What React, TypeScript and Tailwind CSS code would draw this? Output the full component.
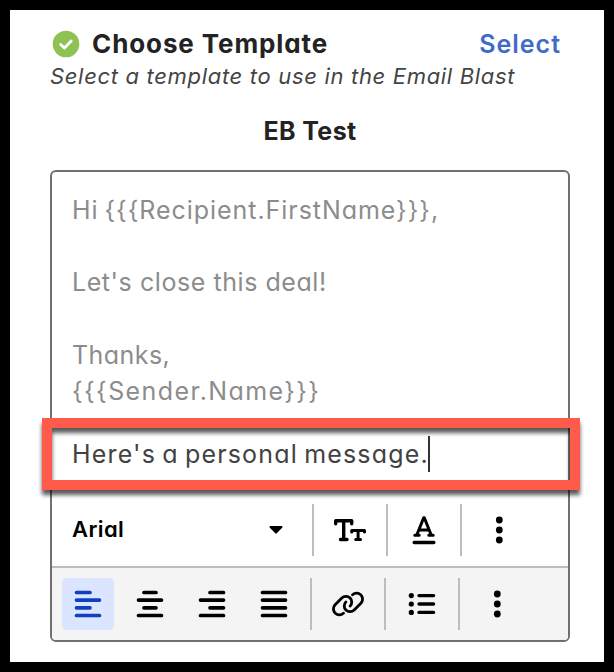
import React from 'react';

const TEXT = 'whitespace-nowrap';

const alignments = [
  { id: 'left', lines: ['M2 2h13.5', 'M2 9.6h23', 'M2 17.3h13.5', 'M2 25h23'] },
  { id: 'center', lines: ['M7.5 2h12', 'M2 9.6h23', 'M7.5 17.3h12', 'M2 25h23'] },
  { id: 'right', lines: ['M11.5 2h13.5', 'M2 9.6h23', 'M11.5 17.3h13.5', 'M2 25h23'] },
  { id: 'justify', lines: ['M2 2h23', 'M2 9.6h23', 'M2 17.3h23', 'M2 25h23'] },
];

const ToolButton: React.FC<{ active?: boolean; label: string; children: React.ReactNode }> = ({ active, label, children }) => (
  <button
    aria-label={label}
    className={`w-[52px] h-[52px] shrink-0 flex items-center justify-center rounded-[5px] ${
      active ? 'bg-[#dbe5ff] text-[#0f41bc]' : 'text-black'
    }`}
  >
    {children}
  </button>
);

const Divider = () => <div className="w-0.5 h-[52px] shrink-0 bg-[#bdbdbd]" />;

const MoreIcon = () => (
  <svg width="8" height="28" viewBox="0 0 8 28" fill="currentColor" className="ml-0.5">
    <circle cx="4.3" cy="4" r="3.4" />
    <circle cx="4.3" cy="14" r="3.4" />
    <circle cx="4.3" cy="24" r="3.4" />
  </svg>
);

const TextSizeIcon = () => (
  <svg width="34" height="24" viewBox="0 0 34 24" fill="none" stroke="currentColor" strokeWidth="3" strokeLinecap="round" strokeLinejoin="round">
    <path d="M2.7 5.8V2.7h16v3.1M10.7 2.7v18.8M7.5 21.5h6.5" strokeWidth="3.4" />
    <path d="M18.7 14v-1.5h12.8V14M25.1 12.5v9M22.7 21.5h4.8" />
  </svg>
);

const TextColorIcon = () => (
  <svg width="24" height="30" viewBox="0 0 24 30" fill="none" stroke="currentColor" strokeWidth="3" strokeLinecap="round" strokeLinejoin="round">
    <path d="M4.8 20L11.7 2.7h.6L19.2 20M7.5 15h9M2.8 20.2h4.4M16.8 20.2h4.4" />
    <path d="M2.2 27.5h19.6" strokeWidth="3.4" />
  </svg>
);

const LinkIcon = () => (
  <svg width="34" height="28" viewBox="0 0 34 28" fill="none" stroke="currentColor" strokeWidth="2.8" strokeLinecap="round">
    <path d="M21.5 4.8c2.3-2 5.800-2.200 8.200-.1s2.500 6.200.2 8.500l-6.700 6.700c-2.300 2.300-6 2.400-8.300.1-2.200-2.200-2.200-5.800 0-8.100" />
    <path d="M12.5 23.200c-2.300 2-5.800 2.200-8.200.1s-2.500-6.200-.2-8.500l6.700-6.700c2.300-2.300 6-2.400 8.300-.1 2.200 2.200 2.200 5.800 0 8.100" />
  </svg>
);

const ListIcon = () => (
  <svg width="28" height="24" viewBox="0 0 28 24" fill="currentColor" stroke="currentColor">
    {[3.6, 12, 20.4].map((y) => (
      <g key={y}>
        <circle cx="3.3" cy={y} r="2.6" stroke="none" />
        <path d={`M11 ${y}h14.6`} strokeWidth="3.3" strokeLinecap="round" />
      </g>
    ))}
  </svg>
);

const App: React.FC = () => {
  return (
    <div className="w-[614px] h-[672px] border-10 border-black bg-white px-10 pt-4 overflow-hidden font-[Inter,sans-serif] [font-feature-settings:'cv11']">
      <div className="flex items-center h-9">
        <svg width="28" height="28" viewBox="0 0 28 28" className="ml-0.5 shrink-0">
          <circle cx="14" cy="14" r="13.3" fill="#8fc255" />
          <path d="M8.7 14.5l3.7 3.5 6.8-7" fill="none" stroke="white" strokeWidth="2.8" strokeLinecap="round" strokeLinejoin="round" />
        </svg>
        <h1 className={`${TEXT} ml-3 text-[26px] leading-9 font-bold text-[#232323] tracking-[0.9px]`}>Choose Template</h1>
        <button className={`${TEXT} ml-auto mr-[3px] leading-9 text-[25px] font-semibold text-[#426bc9] tracking-[1px]`}>Select</button>
      </div>
      <p className={`${TEXT} h-7 leading-7 text-[22px] italic text-[#444] tracking-[0.68px]`}>
        Select a template to use in the Email Blast
      </p>
      <h2 className={`${TEXT} mt-[23px] mb-[21px] h-9 pl-1.5 leading-9 text-center text-[25px] font-bold text-[#232323] tracking-[0.4px]`}>EB Test</h2>

      <div className="relative w-[520px] h-[472px] flex flex-col border-2 border-[#707070] rounded-md">
        <div className="h-[322px] px-5 pt-5 text-[25px] leading-[36.2px] text-[#8c8c8c]">
          <p className={`${TEXT} tracking-[0.95px] [word-spacing:-2px]`}>Hi {'{{{Recipient.FirstName}}}'},</p>
          <br />
          <p className={`${TEXT} tracking-[0.56px]`}>Let's close this deal!</p>
          <br />
          <p className={`${TEXT} tracking-[0.45px]`}>Thanks,</p>
          <p className={`${TEXT} tracking-[1.4px]`}>{'{{{Sender.Name}}}'}</p>
          <div className="mt-[27px] flex items-center h-9 text-[#424242]">
            <span className={`${TEXT} tracking-[1.17px] [word-spacing:-2px]`}>Here's a personal message.</span>
            <span className="-ml-px w-0.5 h-9 bg-[#333]" />
          </div>
        </div>

        <div className="h-[72px] shrink-0 px-2.5 flex items-center gap-2.5">
          <div className="w-[240px] pl-2.5 pr-[18px] flex items-center justify-between text-black">
            <span className={`${TEXT} pb-0.5 text-[22px] font-semibold tracking-[0.4px]`}>Arial</span>
            <svg width="16" height="10" viewBox="0 0 16 10">
              <path d="M2.5 2h11L8 7.5z" fill="black" stroke="black" strokeWidth="2" strokeLinejoin="round" />
            </svg>
          </div>
          <Divider />
          <ToolButton label="Text size"><TextSizeIcon /></ToolButton>
          <Divider />
          <ToolButton label="Text color"><TextColorIcon /></ToolButton>
          <Divider />
          <ToolButton label="More text options"><MoreIcon /></ToolButton>
        </div>

        <div className="h-[74px] shrink-0 px-2.5 flex items-center gap-2.5 border-t-2 border-[#bdbdbd] bg-[#f4f4f4] rounded-b">
          {alignments.map(({ id, lines }) => (
            <ToolButton key={id} label={`Align ${id}`} active={id === 'left'}>
              <svg width="28" height="28" viewBox="-0.5 -0.5 28 28" fill="none" stroke="currentColor" strokeWidth="3.7" strokeLinecap="round">
                <path d={lines.join('')} />
              </svg>
            </ToolButton>
          ))}
          <Divider />
          <ToolButton label="Link"><LinkIcon /></ToolButton>
          <Divider />
          <ToolButton label="Bulleted list"><ListIcon /></ToolButton>
          <Divider />
          <ToolButton label="More paragraph options"><MoreIcon /></ToolButton>
        </div>

        {/* callout frame around the personal message */}
        <div className="absolute -left-2.5 top-[246px] w-[538px] h-[72px] border-10 border-[#ff5a4b] [filter:drop-shadow(0_5px_2px_rgba(0,0,0,0.65))] pointer-events-none" />
      </div>
    </div>
  );
};

export default App;
